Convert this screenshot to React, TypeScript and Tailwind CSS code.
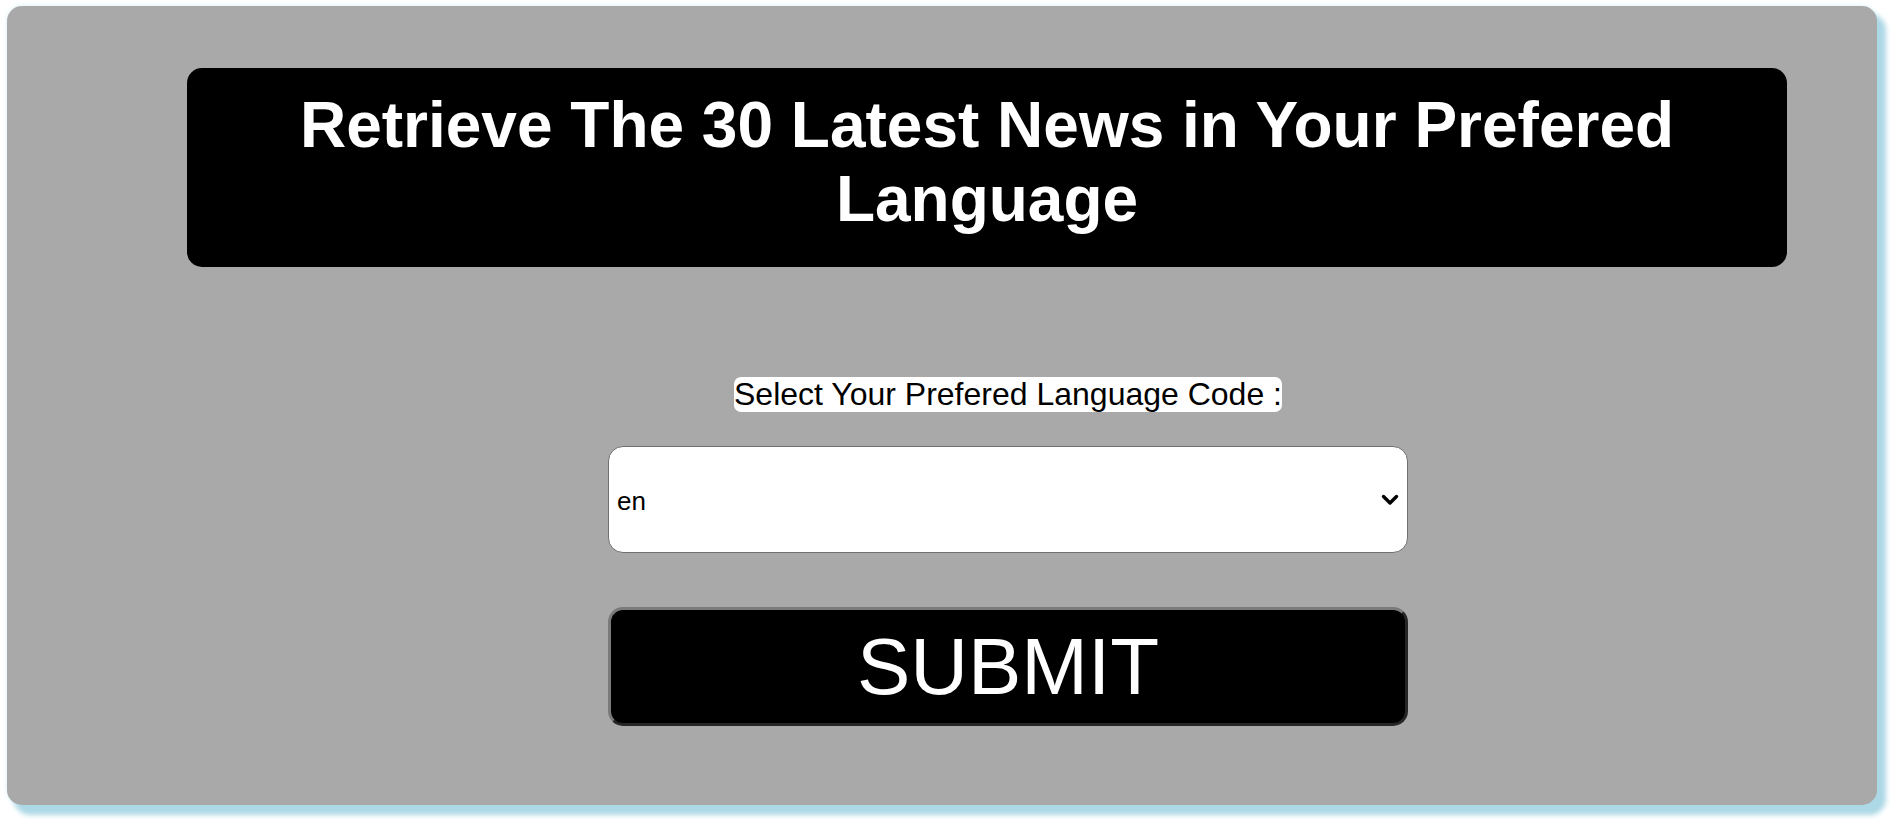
import { useState } from "react";

const LANGS = ["en", "fr", "de", "es", "it", "pt", "ar", "ru", "zh", "ja"];

export default function App() {
    const [lang, setLang] = useState("en");

    return (
        <div className="min-h-screen bg-white pl-[7px] pt-[6px]" style={{ fontFamily: '"Liberation Sans", Arial, sans-serif' }}>
            <div className="w-[1870px] h-[799px] rounded-[15px] bg-[#a9a9a9] shadow-[8px_9px_5px_1px_#add8e6,0_0_4px_#d6eef5]">
                {/* header */}
                <div className="ml-[180px] pt-[62px]">
                    <div className="w-[1600px] h-[199px] rounded-[15px] bg-black pt-[20px] px-[20px]">
                        <h1 className="text-center text-white font-bold text-[64px] leading-[74px]">
                            Retrieve The 30 Latest News in Your Prefered Language
                        </h1>
                    </div>
                </div>

                {/* form */}
                <form className="ml-[601px] w-[800px] mt-[110px] flex flex-col items-center" onSubmit={(e) => e.preventDefault()}>
                    <label htmlFor="lang" className="bg-white text-black rounded-[7px] text-[32px] leading-[35px]">
                        Select Your Prefered Language Code :
                    </label>
                    <div className="relative w-[800px] mt-[34px]">
                        <select
                            id="lang"
                            value={lang}
                            onChange={(e) => setLang(e.target.value)}
                            className="appearance-none w-full h-[107px] rounded-[15px] border-[1.5px] border-[#6f6f6f] bg-white pl-[8px] pt-[4px] text-[26px] text-black outline-none"
                        >
                            {LANGS.map((l) => (
                                <option key={l} value={l}>{l}</option>
                            ))}
                        </select>
                        <svg className="absolute right-[9px] top-[48px] pointer-events-none" width="18" height="12" viewBox="0 0 18 12">
                            <path d="M2.5 2.5 L9 9 L15.5 2.5" fill="none" stroke="black" strokeWidth="3.4" strokeLinecap="round" strokeLinejoin="round" />
                        </svg>
                    </div>
                    <button
                        type="submit"
                        className="mt-[54px] w-[800px] h-[119px] rounded-[15px] bg-black text-white text-[80px] leading-none border-[3px] border-t-[#7a7a7a] border-l-[#7a7a7a] border-b-[#262626] border-r-[#262626]"
                    >
                        SUBMIT
                    </button>
                </form>
            </div>
        </div>
    );
}
